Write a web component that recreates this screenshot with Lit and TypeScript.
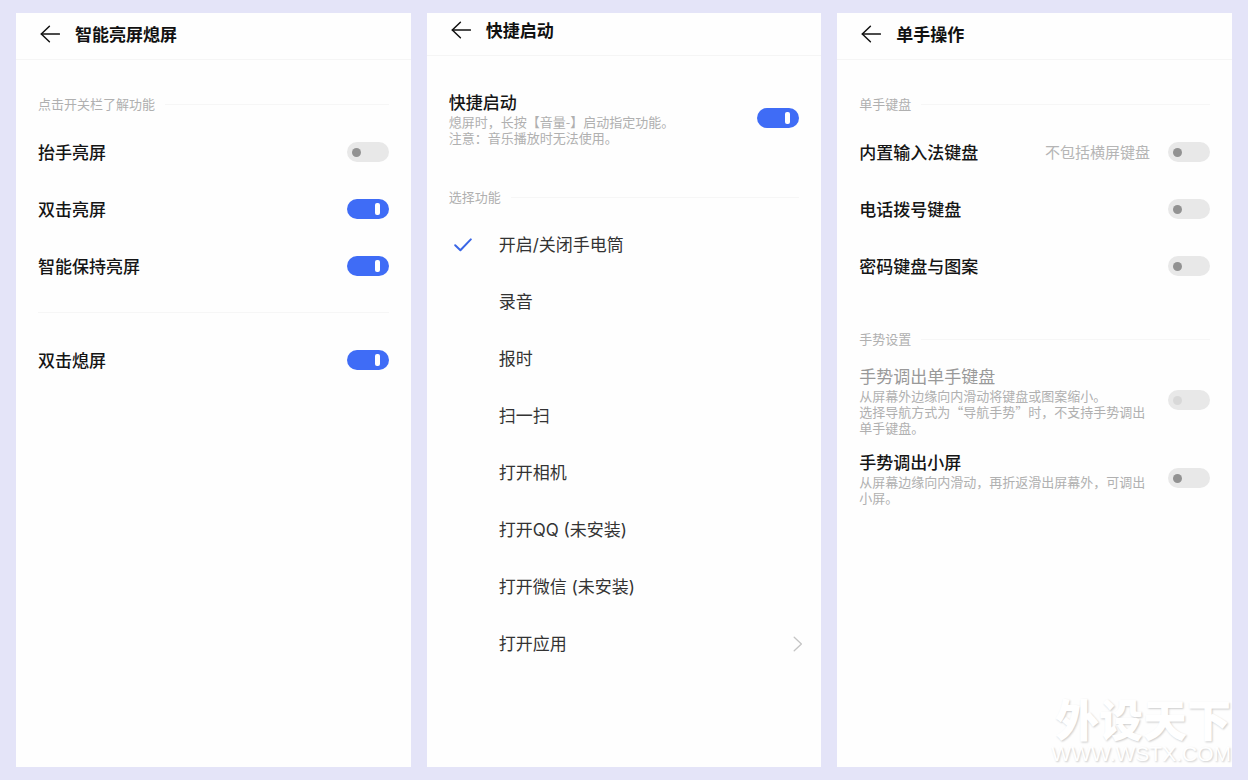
import { LitElement, html, css, svg, nothing } from "lit";
import { customElement, property } from "lit/decorators.js";

const base = css`
  * {
    box-sizing: border-box;
  }
  button {
    appearance: none;
    border: 0;
    padding: 0;
    margin: 0;
    background: none;
    font: inherit;
    color: inherit;
    text-align: left;
    cursor: pointer;
  }
`;

const backIcon = svg`
  <svg width="20" height="18" viewBox="0 0 20 18" fill="none" stroke="#111" stroke-width="1.5" stroke-linecap="round" stroke-linejoin="round">
    <path d="M19.4 9H1.4" /><path d="M9.4 1.2 1.3 9l8.1 7.8" />
  </svg>`;

const checkIcon = svg`
  <svg width="18" height="14" viewBox="0 0 18 14" fill="none" stroke="#3a66e6" stroke-width="2" stroke-linecap="round" stroke-linejoin="round">
    <path d="M1.2 7.2 6.4 12.2 16.8 1.4" />
  </svg>`;

const chevronIcon = svg`
  <svg width="10" height="16" viewBox="0 0 10 16" fill="none" stroke="#c4c4c4" stroke-width="1.3" stroke-linecap="round" stroke-linejoin="round">
    <path d="M1.2 1.2 8.4 8l-7.2 6.8" />
  </svg>`;

@customElement("phone-screen")
class PhoneScreen extends LitElement {
  @property() heading = "";
  @property({ type: Boolean }) compact = false;

  static styles = [
    base,
    css`
      :host {
        display: block;
        min-width: 0;
        background: #fefefe;
      }
      .bar {
        display: flex;
        align-items: center;
        gap: 15px;
        padding: 8px 24px 12px;
        border-bottom: 1px solid #f5f5f5;
      }
      .bar.compact {
        padding-top: 4px;
      }
      .back {
        display: flex;
        align-items: center;
        width: 20px;
        height: 26px;
      }
      .title {
        margin: 0;
        font-size: 17px;
        line-height: 26px;
        font-weight: 600;
        color: #111;
      }
      .body {
        padding: 34px 22px;
      }
    `,
  ];

  render() {
    return html`
      <header class="bar ${this.compact ? "compact" : ""}">
        <button class="back" aria-label="返回">${backIcon}</button>
        <h1 class="title">${this.heading}</h1>
      </header>
      <div class="body"><slot></slot></div>
    `;
  }
}

@customElement("section-title")
class SectionTitle extends LitElement {
  static styles = css`
    :host {
      display: flex;
      align-items: center;
      gap: 10px;
      margin-bottom: 9px;
      font-size: 13px;
      line-height: 20px;
      color: #b0b0b0;
    }
    .line {
      flex: 1;
      height: 1px;
      background: #f6f6f6;
    }
  `;

  render() {
    return html`<slot></slot><span class="line"></span>`;
  }
}

@customElement("switch-row")
class SwitchRow extends LitElement {
  @property() label = "";
  @property() hint = "";
  @property({ attribute: false }) lines: string[] = [];
  @property({ type: Boolean }) on = false;
  @property({ type: Boolean }) disabled = false;

  static styles = [
    base,
    css`
      :host {
        display: block;
      }
      .row {
        display: flex;
        align-items: center;
        gap: 18px;
        min-height: 57px;
      }
      .row.noted {
        min-height: 0;
      }
      .text {
        flex: 1;
        min-width: 0;
        display: flex;
        flex-direction: column;
      }
      .label {
        font-size: 17px;
        line-height: 24px;
        font-weight: 500;
        color: #151515;
      }
      .label.off {
        font-weight: 400;
        color: #999;
      }
      .note {
        font-size: 13px;
        line-height: 16px;
        color: #b0b0b0;
      }
      .line {
        display: block;
      }
      .hint {
        font-size: 15px;
        line-height: 24px;
        color: #b5b5b5;
      }
      .switch {
        appearance: none;
        position: relative;
        flex: none;
        width: 42px;
        height: 20px;
        margin: 0;
        border-radius: 10px;
        background: #e8e8e8;
        cursor: pointer;
      }
      .switch::before {
        content: "";
        position: absolute;
        left: 5px;
        top: 6px;
        width: 9px;
        height: 9px;
        border-radius: 5px;
        background: #929292;
      }
      .switch:disabled::before {
        background: #d8d8d8;
      }
      .switch:checked {
        background: #3f6cf6;
      }
      .switch:checked::before {
        left: 28px;
        top: 4px;
        width: 5px;
        height: 12px;
        border-radius: 2px;
        background: #fff;
      }
    `,
  ];

  render() {
    return html`
      <div class="row ${this.lines.length ? "noted" : ""}">
        <div class="text">
          <label class="label ${this.disabled ? "off" : ""}" for="s">${this.label}</label>
          ${this.lines.length
            ? html`<span class="note">${this.lines.map((l) => html`<span class="line">${l}</span>`)}</span>`
            : nothing}
        </div>
        ${this.hint ? html`<span class="hint">${this.hint}</span>` : nothing}
        <input
          class="switch"
          id="s"
          type="checkbox"
          role="switch"
          .checked=${this.on}
          ?disabled=${this.disabled}
        />
      </div>
    `;
  }
}

@customElement("option-list")
class OptionList extends LitElement {
  @property({ attribute: false }) options: string[] = [];
  @property() more = "";
  @property({ type: Number }) selected = 0;

  static styles = [
    base,
    css`
      :host {
        display: block;
        font-family: Inter, "Noto Sans CJK SC", sans-serif;
      }
      .option {
        display: grid;
        grid-template-columns: 17px 1fr auto;
        align-items: center;
        column-gap: 28px;
        width: 100%;
        height: 57px;
        padding-left: 5px;
        font-size: 17px;
        line-height: 26px;
        color: #333;
        cursor: pointer;
      }
      .mark {
        display: grid;
        align-items: center;
      }
      .mark > * {
        grid-area: 1 / 1;
      }
      .radio {
        appearance: none;
        width: 17px;
        height: 17px;
        margin: 0;
      }
      .arrow {
        display: flex;
        margin-right: -4px;
      }
    `,
  ];

  render() {
    return html`
      ${this.options.map(
        (text, i) => html`
          <label class="option">
            <span class="mark">
              <input
                class="radio"
                type="radio"
                name="action"
                .checked=${i === this.selected}
                @change=${() => (this.selected = i)}
              />
              ${i === this.selected ? checkIcon : nothing}
            </span>
            <span>${text}</span>
          </label>
        `
      )}
      <button class="option">
        <span></span><span>${this.more}</span><span class="arrow">${chevronIcon}</span>
      </button>
    `;
  }
}

@customElement("app-root")
class AppRoot extends LitElement {
  static styles = css`
    :host {
      display: block;
      position: relative;
      background: #e4e4f8;
      font-family: "Noto Sans CJK SC", "Noto Sans", sans-serif;
    }
    .screens {
      display: grid;
      grid-template-columns: repeat(3, minmax(0, 1fr));
      gap: 16px;
      box-sizing: border-box;
      min-height: 100vh;
      padding: 13px 16px;
    }
    .divider {
      height: 1px;
      margin: 18px 0;
      border: 0;
      background: #f6f6f6;
    }
    .spaced {
      margin-top: 35px;
    }
    .after-note {
      margin-top: 41px;
    }
    .stack {
      display: flex;
      flex-direction: column;
      gap: 14px;
      margin-top: 15px;
    }
    .watermark {
      position: absolute;
      right: 17px;
      bottom: 16px;
      display: flex;
      flex-direction: column;
      align-items: flex-end;
      gap: 4px;
      color: #fff;
      text-shadow: 1px 1px 2px rgba(0, 0, 0, 0.2);
      pointer-events: none;
    }
    .brand {
      font-size: 44px;
      line-height: 44px;
      font-weight: 900;
    }
    .site {
      font-family: "Liberation Sans", sans-serif;
      font-size: 21px;
      line-height: 20px;
    }
  `;

  render() {
    return html`
      <main class="screens" lang="zh-CN">
        <phone-screen heading="智能亮屏熄屏">
          <section-title>点击开关栏了解功能</section-title>
          <switch-row label="抬手亮屏"></switch-row>
          <switch-row label="双击亮屏" on></switch-row>
          <switch-row label="智能保持亮屏" on></switch-row>
          <hr class="divider" />
          <switch-row label="双击熄屏" on></switch-row>
        </phone-screen>

        <phone-screen heading="快捷启动" compact>
          <switch-row
            label="快捷启动"
            on
            .lines=${["熄屏时，长按【音量-】启动指定功能。", "注意：音乐播放时无法使用。"]}
          ></switch-row>
          <section-title class="after-note">选择功能</section-title>
          <option-list
            .options=${[
              "开启/关闭手电筒",
              "录音",
              "报时",
              "扫一扫",
              "打开相机",
              "打开QQ (未安装)",
              "打开微信 (未安装)",
            ]}
            more="打开应用"
          ></option-list>
        </phone-screen>

        <phone-screen heading="单手操作">
          <section-title>单手键盘</section-title>
          <switch-row label="内置输入法键盘" hint="不包括横屏键盘"></switch-row>
          <switch-row label="电话拨号键盘"></switch-row>
          <switch-row label="密码键盘与图案"></switch-row>
          <section-title class="spaced">手势设置</section-title>
          <div class="stack">
            <switch-row
              label="手势调出单手键盘"
              disabled
              .lines=${[
                "从屏幕外边缘向内滑动将键盘或图案缩小。",
                "选择导航方式为“导航手势”时，不支持手势调出单手键盘。",
              ]}
            ></switch-row>
            <switch-row
              label="手势调出小屏"
              .lines=${["从屏幕边缘向内滑动，再折返滑出屏幕外，可调出小屏。"]}
            ></switch-row>
          </div>
        </phone-screen>
      </main>
      <div class="watermark">
        <span class="brand">外设天下</span>
        <span class="site">WWW.WSTX.COM</span>
      </div>
    `;
  }
}
